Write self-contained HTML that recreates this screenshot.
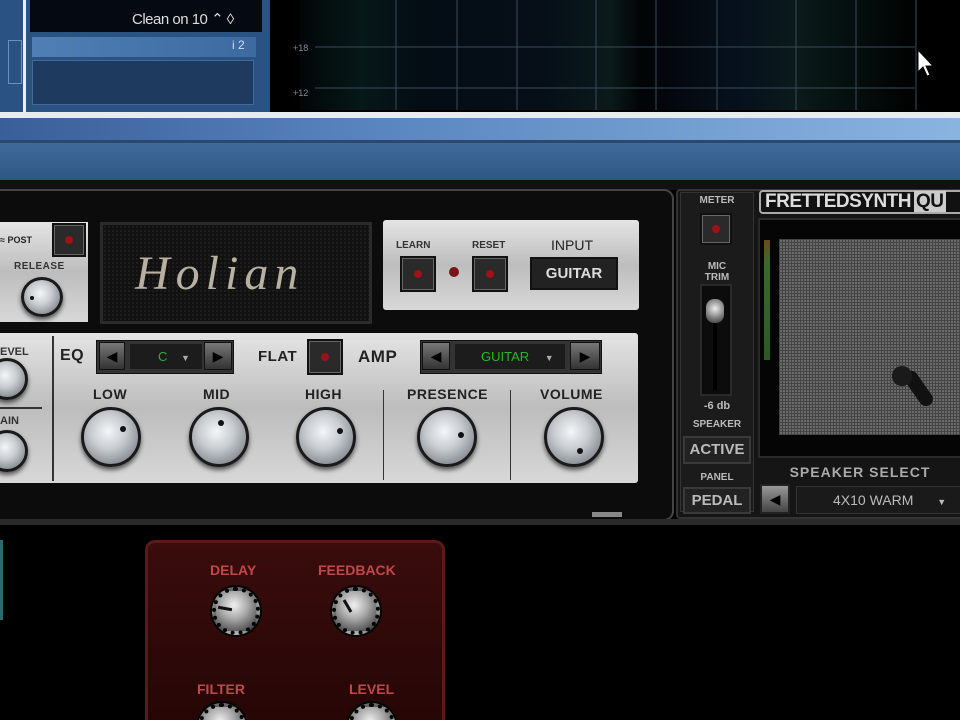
<!DOCTYPE html>
<html style="width:960px;height:720px;overflow:hidden"><head><style>
*{margin:0;padding:0;box-sizing:border-box}
html,body{width:960px;height:720px;overflow:hidden}
body{background:#000;position:relative;font-family:"Liberation Sans",sans-serif}
.a{position:absolute}
.lbl{position:absolute;font-weight:bold;color:#222;font-size:14px;letter-spacing:0.5px}
.knob{position:absolute;border-radius:50%;background:radial-gradient(circle at 45% 40%,#f4f6f8 0%,#c8ccd0 40%,#8a9096 75%,#4a4e52 100%);border:3px solid #1a1a1a;box-shadow:0 3px 5px rgba(0,0,0,.6)}
.rk{position:absolute;border-radius:50%;background:radial-gradient(circle at 45% 35%,#f0f0f0 0%,#aaa 40%,#555 80%,#222 100%);border:4px dotted #050505;box-shadow:0 0 0 2px #050505}
.dot{position:absolute;width:6px;height:6px;border-radius:50%;background:#111}
.btn{position:absolute;background:#2a2a2a;border:2px solid #111;box-shadow:inset 0 0 0 1px #666}
.btn:after{content:"";position:absolute;left:50%;top:50%;width:8px;height:8px;margin:-4px;border-radius:50%;background:#a01018}
.silver{position:absolute;background:linear-gradient(#e4e4e4,#bdbdbd 50%,#d8d8d8);}
.arrow{position:absolute;background:linear-gradient(#777,#333);border:1px solid #111;color:#000;font-size:14px;text-align:center;line-height:26px}
.dk{position:absolute;color:#bbb;font-weight:bold;font-size:11px;text-align:center}
</style></head><body>
<div class="a" style="left:0;top:0;width:270px;height:112px;background:#2a5282"></div>
<div class="a" style="left:30px;top:0;width:232px;height:32px;background:#050a12"></div>
<div class="a" style="left:132px;top:10px;color:#ddd;font-size:15px;letter-spacing:-0.5px">Clean on 10 ⌃ ◊</div>
<div class="a" style="left:32px;top:37px;width:224px;height:20px;background:linear-gradient(90deg,#4f7fb4,#3d6aa0)"></div>
<div class="a" style="left:232px;top:38px;color:#cde;font-size:12px">i 2</div>
<div class="a" style="left:32px;top:60px;width:222px;height:45px;background:#1e3a5e;border:1px solid #3f6a9a"></div>
<div class="a" style="left:8px;top:40px;width:14px;height:44px;border:1px solid #6a90bb"></div>
<div class="a" style="left:23px;top:0;width:3px;height:112px;background:#e8eef4"></div>
<div class="a" style="left:300px;top:0;width:620px;height:110px;background:linear-gradient(90deg,#020608 0%,#061818 10%,#040c14 20%,#060f18 40%,#0a1a1a 50%,#020406 55%,#06101c 70%,#0a1a1a 80%,#000 100%)"></div>
<svg class="a" style="left:290px;top:0" width="630" height="110">
<g stroke="#3a4a58" stroke-width="1">
<line x1="25" y1="88" x2="625" y2="88"/><line x1="25" y1="47" x2="625" y2="47"/>
<line x1="106" y1="0" x2="106" y2="110"/><line x1="167" y1="0" x2="167" y2="110"/><line x1="227" y1="0" x2="227" y2="110"/><line x1="306" y1="0" x2="306" y2="110"/><line x1="366" y1="0" x2="366" y2="110"/><line x1="427" y1="0" x2="427" y2="110"/><line x1="506" y1="0" x2="506" y2="110"/><line x1="566" y1="0" x2="566" y2="110"/><line x1="626" y1="0" x2="626" y2="110"/></g>
<text x="3" y="51" fill="#889" font-size="9" font-family="Liberation Sans">+18</text>
<text x="3" y="96" fill="#889" font-size="9" font-family="Liberation Sans">+12</text>
</svg>
<svg class="a" style="left:916px;top:48px" width="20" height="32"><path d="M2 2 L2 24 L7 19 L11 28 L14 27 L10 18 L17 18 Z" fill="#fff" stroke="#000"/></svg>
<div class="a" style="left:0;top:112px;width:960px;height:6px;background:#e6ecf2"></div>
<div class="a" style="left:0;top:118px;width:960px;height:22px;background:linear-gradient(90deg,#3a5e98,#5a86c0 40%,#8ab4e0 100%)"></div>
<div class="a" style="left:0;top:140px;width:960px;height:3px;background:#2a4870"></div>
<div class="a" style="left:0;top:143px;width:960px;height:37px;background:linear-gradient(#3f6b9a,#2e5683)"></div>
<div class="a" style="left:0;top:180px;width:960px;height:10px;background:#111"></div>
<div class="a" style="left:-10px;top:189px;width:684px;height:332px;background:#0c0c0c;border:2px solid #444;border-radius:10px"></div>
<div class="silver" style="left:0;top:222px;width:88px;height:100px"></div>
<div class="a" style="left:0;top:235px;font-size:9px;font-weight:bold;color:#222">≈ POST</div>
<div class="btn" style="left:52px;top:223px;width:34px;height:34px"></div>
<div class="a" style="left:14px;top:261px;font-size:10px;font-weight:bold;color:#333;letter-spacing:0.5px">RELEASE</div>
<div class="knob" style="left:21px;top:277px;width:42px;height:40px"><div class="dot" style="left:6px;top:16px;width:4px;height:4px"></div></div>
<div class="a" style="left:100px;top:222px;width:272px;height:102px;background:#111;border:3px solid #2a2a2a;background-image:radial-gradient(#222 1px,transparent 1px);background-size:4px 4px"></div>
<div class="a" style="left:135px;top:246px;font-family:'Liberation Serif',serif;font-style:italic;font-size:48px;color:#b8b0a0;letter-spacing:6px">Holian</div>
<div class="silver" style="left:383px;top:220px;width:256px;height:90px;border-radius:3px"></div>
<div class="a" style="left:396px;top:240px;font-size:10px;font-weight:bold;color:#333">LEARN</div>
<div class="a" style="left:472px;top:240px;font-size:10px;font-weight:bold;color:#333">RESET</div>
<div class="a" style="left:551px;top:237px;font-size:14px;color:#222">INPUT</div>
<div class="btn" style="left:400px;top:256px;width:36px;height:36px"></div>
<div class="a" style="left:449px;top:267px;width:10px;height:10px;border-radius:50%;background:#7a1418"></div>
<div class="btn" style="left:472px;top:256px;width:36px;height:36px"></div>
<div class="a" style="left:530px;top:257px;width:88px;height:33px;background:#222;border:2px solid #111;color:#ddd;font-size:15px;font-weight:bold;text-align:center;line-height:29px">GUITAR</div>
<div class="silver" style="left:0;top:333px;width:638px;height:150px;border-radius:0 3px 3px 0"></div>
<div class="a" style="left:52px;top:336px;width:2px;height:145px;background:#333"></div>
<div class="a" style="left:383px;top:390px;width:1px;height:90px;background:#333"></div>
<div class="a" style="left:510px;top:390px;width:1px;height:90px;background:#333"></div>
<div class="a" style="left:0;top:407px;width:42px;height:2px;background:#333"></div>
<div class="a" style="left:0;top:346px;font-size:11px;font-weight:bold;color:#333">EVEL</div>
<div class="a" style="left:0;top:415px;font-size:11px;font-weight:bold;color:#333">AIN</div>
<div class="knob" style="left:-14px;top:358px;width:42px;height:42px"></div>
<div class="knob" style="left:-14px;top:430px;width:42px;height:42px"></div>
<div class="lbl" style="left:60px;top:347px;font-size:16px">EQ</div>
<div class="a" style="left:96px;top:340px;width:138px;height:34px;background:#333;border:1px solid #111"></div>
<div class="arrow" style="left:99px;top:342px;width:26px;height:28px">◀</div>
<div class="a" style="left:130px;top:344px;width:72px;height:25px;background:#1c1c1c;color:#3a3;font-size:13px;line-height:25px;padding-left:28px">C <span style="color:#aaa;font-size:9px;margin-left:10px">▼</span></div>
<div class="arrow" style="left:204px;top:342px;width:28px;height:28px">▶</div>
<div class="lbl" style="left:258px;top:348px;font-size:15px">FLAT</div>
<div class="btn" style="left:307px;top:339px;width:36px;height:36px"></div>
<div class="lbl" style="left:358px;top:347px;font-size:17px">AMP</div>
<div class="a" style="left:420px;top:340px;width:182px;height:34px;background:#333;border:1px solid #111"></div>
<div class="arrow" style="left:422px;top:342px;width:28px;height:28px">◀</div>
<div class="a" style="left:455px;top:344px;width:110px;height:25px;background:#1c1c1c;color:#2b2;font-size:13px;line-height:25px;padding-left:26px">GUITAR <span style="color:#aaa;font-size:9px;margin-left:12px">▼</span></div>
<div class="arrow" style="left:570px;top:342px;width:30px;height:28px">▶</div>
<div class="lbl" style="left:93px;top:386px">LOW</div>
<div class="lbl" style="left:203px;top:386px">MID</div>
<div class="lbl" style="left:305px;top:386px">HIGH</div>
<div class="lbl" style="left:407px;top:386px">PRESENCE</div>
<div class="lbl" style="left:540px;top:386px">VOLUME</div>
<div class="knob" style="left:81px;top:407px;width:60px;height:60px"><div class="dot" style="left:36px;top:16px"></div></div>
<div class="knob" style="left:189px;top:407px;width:60px;height:60px"><div class="dot" style="left:26px;top:10px"></div></div>
<div class="knob" style="left:296px;top:407px;width:60px;height:60px"><div class="dot" style="left:38px;top:18px"></div></div>
<div class="knob" style="left:417px;top:407px;width:60px;height:60px"><div class="dot" style="left:38px;top:22px"></div></div>
<div class="knob" style="left:544px;top:407px;width:60px;height:60px"><div class="dot" style="left:30px;top:38px"></div></div>
<div class="a" style="left:592px;top:512px;width:30px;height:5px;background:#888"></div>
<div class="a" style="left:676px;top:189px;width:290px;height:330px;background:#151515;border:2px solid #333;border-radius:4px"></div>
<div class="a" style="left:680px;top:192px;width:74px;height:320px;background:#1b1b1b;border:1px solid #333"></div>
<div class="dk" style="left:680px;top:195px;width:74px;font-size:10px">METER</div>
<div class="btn" style="left:700px;top:213px;width:32px;height:32px"></div>
<div class="dk" style="left:680px;top:261px;width:74px;font-size:10px;line-height:11px">MIC<br>TRIM</div>
<div class="a" style="left:700px;top:284px;width:32px;height:112px;background:#0c0c0c;border:2px solid #2a2a2a"></div>
<div class="a" style="left:713px;top:300px;width:4px;height:90px;background:#000"></div>
<div class="a" style="left:706px;top:299px;width:18px;height:24px;border-radius:8px;background:radial-gradient(circle at 50% 40%,#eee,#777 60%,#333)"></div>
<div class="dk" style="left:680px;top:400px;width:74px">-6 db</div>
<div class="dk" style="left:680px;top:419px;width:74px;font-size:10px">SPEAKER</div>
<div class="a" style="left:683px;top:436px;width:68px;height:28px;background:#222;border:2px solid #3a3a3a;color:#bbb;font-weight:bold;font-size:15px;text-align:center;line-height:24px">ACTIVE</div>
<div class="dk" style="left:680px;top:472px;width:74px;font-size:10px">PANEL</div>
<div class="a" style="left:683px;top:487px;width:68px;height:27px;background:#222;border:2px solid #3a3a3a;color:#bbb;font-weight:bold;font-size:15px;text-align:center;line-height:23px">PEDAL</div>
<div class="a" style="left:759px;top:190px;width:210px;height:24px;background:#111;border:2px solid #aaa;border-radius:4px;color:#ddd;font-size:19px;font-weight:bold;line-height:20px;padding-left:4px;letter-spacing:-0.5px;white-space:nowrap">FRETTEDSYNTH<span style="background:#ccc;color:#111;padding:0 2px;margin-left:3px">QU</span></div>
<div class="a" style="left:758px;top:218px;width:210px;height:240px;background:#050505;border:2px solid #2a2a2a"></div>
<div class="a" style="left:764px;top:240px;width:6px;height:120px;background:linear-gradient(#6a4a20,#3a6a2a 20%,#2a5a22)"></div>
<div class="a" style="left:779px;top:239px;width:190px;height:196px;background:#6a6a6a;background-image:linear-gradient(#444 1px,transparent 1px),linear-gradient(90deg,#444 1px,transparent 1px);background-size:3px 3px"></div>
<div class="a" style="left:900px;top:372px;width:14px;height:40px;background:#111;border-radius:7px;transform:rotate(-35deg);transform-origin:top"></div>
<div class="a" style="left:892px;top:366px;width:20px;height:20px;background:#1a1a1a;border-radius:50%"></div>
<div class="dk" style="left:760px;top:464px;width:200px;font-size:14px;color:#aaa;letter-spacing:1px">SPEAKER SELECT</div>
<div class="a" style="left:760px;top:484px;width:30px;height:30px;background:linear-gradient(#999,#444);border:2px solid #222;color:#000;font-size:14px;text-align:center;line-height:26px">◀</div>
<div class="a" style="left:796px;top:486px;width:166px;height:28px;background:#1a1a1a;border:1px solid #333;color:#bbb;font-size:14px;line-height:26px;padding-left:36px">4X10 WARM <span style="font-size:9px;margin-left:20px">▼</span></div>
<div class="a" style="left:0;top:519px;width:960px;height:6px;background:#2a2a2a"></div>
<div class="a" style="left:0;top:540px;width:3px;height:80px;background:#2a6a6a"></div>
<div class="a" style="left:145px;top:540px;width:300px;height:185px;border:3px solid #5a1a1a;border-bottom:none;border-radius:10px 10px 0 0;background:linear-gradient(#3a0c0c,#260606)"></div>
<div class="a" style="left:210px;top:562px;color:#c04848;font-size:14px;font-weight:bold">DELAY</div>
<div class="a" style="left:318px;top:562px;color:#c04848;font-size:14px;font-weight:bold">FEEDBACK</div>
<div class="a" style="left:197px;top:681px;color:#c04848;font-size:14px;font-weight:bold">FILTER</div>
<div class="a" style="left:349px;top:681px;color:#c04848;font-size:14px;font-weight:bold">LEVEL</div>
<div class="rk" style="left:212px;top:587px;width:48px;height:48px"><div class="a" style="left:2px;top:16px;width:14px;height:3px;background:#111;transform:rotate(10deg)"></div></div>
<div class="rk" style="left:332px;top:587px;width:48px;height:48px"><div class="a" style="left:10px;top:8px;width:3px;height:14px;background:#111;transform:rotate(-30deg)"></div></div>
<div class="rk" style="left:198px;top:703px;width:48px;height:48px"></div>
<div class="rk" style="left:348px;top:703px;width:48px;height:48px"></div>
</body></html>
